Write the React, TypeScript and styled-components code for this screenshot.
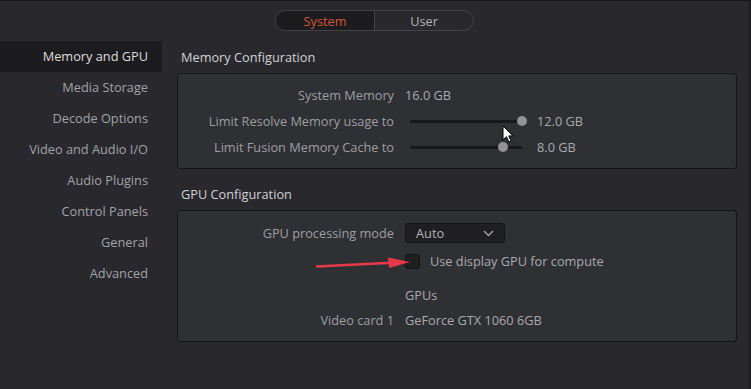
import styled, { createGlobalStyle } from 'styled-components';

const GlobalStyle = createGlobalStyle`
  html, body {
    margin: 0;
    padding: 0;
    background: #28282d;
  }
  body {
    font-family: "Open Sans", "Noto Sans", sans-serif;
    font-size: 12.75px;
  }
`;

const Window = styled.div`
  position: relative;
  width: 751px;
  height: 389px;
  box-sizing: border-box;
  background: #28282d;
  border-top: 1px solid #161618;
  border-right: 2px solid #1b1b1e;
  display: flex;
  flex-direction: column;
  overflow: hidden;
`;

const TopBar = styled.div`
  height: 40px;
  display: flex;
  align-items: center;
  justify-content: center;
`;

const TabGroup = styled.div`
  display: flex;
  width: 199px;
  height: 21px;
  margin-top: -1px;
  border: 1px solid #434347;
  border-radius: 11px;
  overflow: hidden;
  box-sizing: border-box;
`;

const Tab = styled.div<{ $active?: boolean }>`
  flex: 1;
  display: flex;
  align-items: center;
  justify-content: center;
  color: ${(p) => (p.$active ? '#d9533b' : '#b4b4b8')};
  background: ${(p) => (p.$active ? '#1c1c1f' : 'transparent')};
  & + & {
    border-left: 1px solid #434347;
  }
`;

const Body = styled.div`
  flex: 1;
  display: flex;
`;

const Sidebar = styled.nav`
  width: 162px;
  display: flex;
  flex-direction: column;
`;

const NavItem = styled.div<{ $active?: boolean }>`
  height: 31px;
  box-sizing: border-box;
  padding: 0 14px 2px 0;
  display: flex;
  align-items: center;
  justify-content: flex-end;
  color: ${(p) => (p.$active ? '#dcdcde' : '#a3a3a7')};
  background: ${(p) => (p.$active ? '#1c1c1f' : 'transparent')};
`;

const Main = styled.main`
  flex: 1;
  padding: 0 12px 0 15px;
  display: flex;
  flex-direction: column;
`;

const Section = styled.section`
  & + & {
    margin-top: 9px;
  }
`;

const SectionTitle = styled.div`
  height: 32px;
  display: flex;
  align-items: center;
  padding-left: 4px;
  color: #d2d2d5;
`;

const Panel = styled.div<{ $pad: string }>`
  background: #2f3034;
  border: 1px solid #141416;
  border-radius: 3px;
  padding: ${(p) => p.$pad};
  display: flex;
  flex-direction: column;
`;

const Row = styled.div<{ $h: number; $gap?: number }>`
  height: ${(p) => p.$h}px;
  margin-top: ${(p) => p.$gap ?? 0}px;
  display: grid;
  grid-template-columns: 216px 1fr;
  column-gap: 11px;
  align-items: center;
`;

const Label = styled.div`
  text-align: right;
  color: #9e9ea2;
  white-space: nowrap;
`;

const Value = styled.div`
  display: flex;
  align-items: center;
  color: #aaaaae;
  white-space: nowrap;
`;

const Slider = styled.div`
  position: relative;
  width: 122px;
  height: 12px;
  margin-right: 10px;
`;

const Track = styled.div`
  position: absolute;
  left: 5px;
  right: 5px;
  top: 5px;
  height: 3px;
  border-radius: 2px;
  background: #18181a;
`;

const Thumb = styled.div`
  position: absolute;
  top: -4px;
  width: 10px;
  height: 10px;
  margin-left: -5px;
  border-radius: 50%;
  background: #939397;
`;

const Select = styled.div`
  width: 100px;
  height: 20px;
  box-sizing: border-box;
  padding: 0 10px;
  display: flex;
  align-items: center;
  justify-content: space-between;
  background: #1f1f22;
  border: 1px solid #131315;
  border-radius: 3px;
  color: #b4b4b8;
`;

const Check = styled.span`
  width: 15px;
  height: 15px;
  box-sizing: border-box;
  margin-right: 10px;
  background: #1f1f22;
  border: 1px solid #121214;
  border-radius: 3px;
`;

const Overlay = styled.svg`
  position: absolute;
  pointer-events: none;
`;

const sliders = [
  { label: 'Limit Resolve Memory usage to', pct: 100, value: '12.0 GB' },
  { label: 'Limit Fusion Memory Cache to', pct: 83, value: '8.0 GB' },
];

const navItems = [
  'Memory and GPU',
  'Media Storage',
  'Decode Options',
  'Video and Audio I/O',
  'Audio Plugins',
  'Control Panels',
  'General',
  'Advanced',
];

export default function App() {
  return (
    <>
      <GlobalStyle />
      <Window>
        <TopBar>
          <TabGroup>
            <Tab $active>System</Tab>
            <Tab>User</Tab>
          </TabGroup>
        </TopBar>
        <Body>
          <Sidebar>
            {navItems.map((n, i) => (
              <NavItem key={n} $active={i === 0}>
                {n}
              </NavItem>
            ))}
          </Sidebar>
          <Main>
            <Section>
              <SectionTitle>Memory Configuration</SectionTitle>
              <Panel $pad="8px 0 8px">
                <Row $h={26}>
                  <Label>System Memory</Label>
                  <Value>16.0 GB</Value>
                </Row>
                {sliders.map((s) => (
                  <Row key={s.label} $h={26}>
                    <Label>{s.label}</Label>
                    <Value>
                      <Slider>
                        <Track>
                          <Thumb style={{ left: `${s.pct}%` }} />
                        </Track>
                      </Slider>
                      {s.value}
                    </Value>
                  </Row>
                ))}
              </Panel>
            </Section>
            <Section>
              <SectionTitle>GPU Configuration</SectionTitle>
              <Panel $pad="9px 0 9px">
                <Row $h={26}>
                  <Label>GPU processing mode</Label>
                  <Value>
                    <Select>
                      Auto
                      <svg width="11" height="7" viewBox="0 0 11 7">
                        <path d="M1 1l4.5 4.5L10 1" fill="none" stroke="#a8a8ac" strokeWidth="1.3" />
                      </svg>
                    </Select>
                  </Value>
                </Row>
                <Row $h={30}>
                  <span />
                  <Value>
                    <Check />
                    Use display GPU for compute
                  </Value>
                </Row>
                <Row $h={26} $gap={6}>
                  <span />
                  <Value>GPUs</Value>
                </Row>
                <Row $h={24}>
                  <Label>Video card 1</Label>
                  <Value>GeForce GTX 1060 6GB</Value>
                </Row>
              </Panel>
            </Section>
          </Main>
        </Body>
        <Overlay width="100" height="14" viewBox="0 0 100 14" style={{ left: 316, top: 255 }}>
          <path d="M1 10.5L80 6.5" stroke="#e8394b" strokeWidth="2.4" strokeLinecap="round" />
          <path d="M72 1.5L94 6L73 12Z" fill="#e8394b" />
        </Overlay>
        <Overlay width="12" height="19" viewBox="0 0 12 19" style={{ left: 502, top: 124 }}>
          <path d="M1 1v14l3.5-3.3 2.4 5.3 2.2-1-2.3-5.1H11Z" fill="#fff" stroke="#000" strokeWidth="1" strokeLinejoin="round" />
        </Overlay>
      </Window>
    </>
  );
}
